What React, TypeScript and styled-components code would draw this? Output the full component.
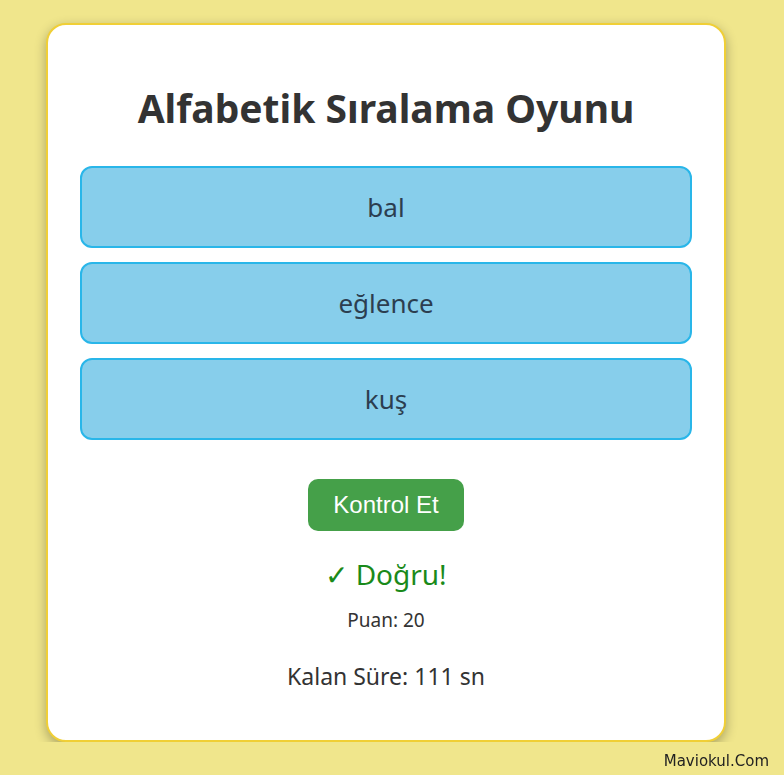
import styled, { createGlobalStyle } from 'styled-components';

const GlobalStyle = createGlobalStyle`
  body {
    margin: 0;
    background: #f0e68c;
    font-family: "Comic Sans MS", "Noto Sans", sans-serif;
    color: #333;
  }
`;

const Page = styled.div`
  display: flex;
  justify-content: center;
  padding: 23px 12px 0 0;
`;

const Card = styled.div`
  width: 680px;
  box-sizing: border-box;
  padding: 32px 32px 49px;
  background: #fff;
  border: 2px solid #f0cf36;
  border-radius: 20px;
  box-shadow: 0 4px 12px rgba(0, 0, 0, 0.3);
  display: flex;
  flex-direction: column;
  align-items: center;
`;

const Title = styled.h1`
  margin: 27px 0 34px;
  font-size: 39px;
  line-height: 48px;
  font-weight: 700;
  color: #333;
`;

const WordList = styled.div`
  width: 100%;
  display: flex;
  flex-direction: column;
  gap: 14px;
`;

const WordItem = styled.div`
  height: 82px;
  box-sizing: border-box;
  display: flex;
  align-items: center;
  justify-content: center;
  background: #87ceeb;
  border: 2px solid #29b6e9;
  border-radius: 12px;
  font-size: 26px;
  color: #2c3e50;
  cursor: grab;
`;

const CheckButton = styled.button`
  margin-top: 39px;
  height: 52px;
  padding: 0 25px;
  border: none;
  border-radius: 10px;
  background: #45a049;
  color: #fff;
  font-family: "Liberation Sans", Arial, sans-serif;
  font-size: 24px;
  cursor: pointer;
`;

const Result = styled.div<{ $ok: boolean }>`
  margin-top: 23px;
  font-size: 28px;
  line-height: 40px;
  color: ${p => (p.$ok ? '#1a8a1a' : '#c62828')};
`;

const Score = styled.div`
  margin-top: 13px;
  font-size: 19px;
  line-height: 26px;
  color: #333;
`;

const Timer = styled.div`
  margin-top: 28px;
  font-size: 23px;
  line-height: 30px;
  color: #333;
`;

const Brand = styled.div`
  position: fixed;
  right: 15px;
  bottom: 5px;
  font-family: "DejaVu Sans", Verdana, sans-serif;
  font-size: 15px;
  color: #222;
`;

const words = ['bal', 'eğlence', 'kuş'];

export default function App() {
  return (
    <>
      <GlobalStyle />
      <Page>
        <Card>
          <Title>Alfabetik Sıralama Oyunu</Title>
          <WordList>
            {words.map(w => (
              <WordItem key={w}>{w}</WordItem>
            ))}
          </WordList>
          <CheckButton>Kontrol Et</CheckButton>
          <Result $ok>✓ Doğru!</Result>
          <Score>Puan: 20</Score>
          <Timer>Kalan Süre: 111 sn</Timer>
        </Card>
      </Page>
      <Brand>Maviokul.Com</Brand>
    </>
  );
}
